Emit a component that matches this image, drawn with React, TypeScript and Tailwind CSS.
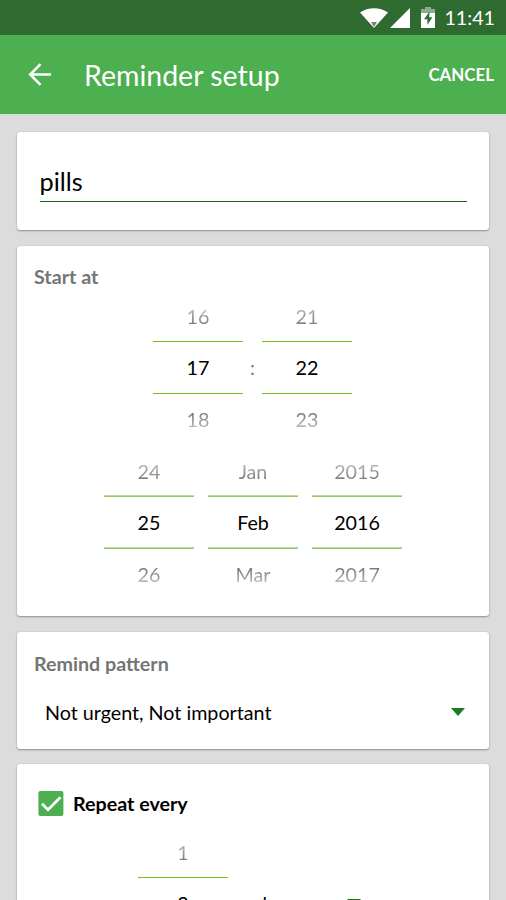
import type { ReactNode } from "react";
import clsx from "clsx";

const dateColumns = [
  ["24", "25", "26"],
  ["Jan", "Feb", "Mar"],
  ["2015", "2016", "2017"],
];

function Card({ children, className }: { children?: ReactNode; className?: string }) {
  return (
    <section
      className={clsx(
        "flex-none rounded-[3px] bg-white shadow-[0_1px_2px_rgba(0,0,0,0.35),0_0_1px_rgba(0,0,0,0.2)]",
        className
      )}
    >
      {children}
    </section>
  );
}

// Selected value sits between two 52px-spaced dividers
function Picker({ values, soft }: { values: string[]; soft?: boolean }) {
  const [prev, current, next] = values;
  const line = soft
    ? "-mt-px h-[2px] bg-linear-to-b from-[#c9e4b0] to-[#83bf4b]"
    : "h-px bg-[#74c218]";

  return (
    <div className="flex w-[90px] flex-none flex-col text-center text-[19.7px] leading-[24px] text-black">
      <div className="h-[37px] pt-px bg-linear-to-b from-[#bdbdbd] from-10% to-[#777] to-60% bg-clip-text text-transparent">
        {prev}
      </div>
      <div className={line} />
      <div className="h-[51px] pt-[14px]">{current}</div>
      <div className={line} />
      <div className="mt-[14px] h-[24px] bg-linear-to-b from-[#777] from-20% to-[#c4c4c4] to-90% bg-clip-text text-transparent">
        {next}
      </div>
    </div>
  );
}

function StatusBar() {
  return (
    <div className="flex h-[35px] flex-none items-center justify-end bg-[#2f6b31] pr-[11px] text-white">
      <svg width="28" height="20" viewBox="0 0 28 20" className="mt-px">
        <path d="M0 4.5C8-1.3 20-1.3 28 4.5L14 20Z" fill="#fff" />
        <path d="M11 14h6l-3 5z" fill="#7d7d7d" />
      </svg>
      <svg width="20" height="20" viewBox="0 0 20 20" className="ml-[2px] mt-px">
        <path d="M20 0v20H0z" fill="#fff" />
      </svg>
      <svg width="14" height="21" viewBox="0 0 14 21" className="ml-[11px]">
        <path d="M4 0h6v2h4v4H0V2h4z" fill="#8bad8c" />
        <path d="M0 6h14v15H0z" fill="#fff" />
        <path d="M8.5 4.5 3 12.2h3.4V18l5-7.7H8.2z" fill="#2f6b31" />
      </svg>
      <span className="ml-[9px] text-[19.7px] leading-[35px]">11:41</span>
    </div>
  );
}

function AppBar() {
  return (
    <header className="flex h-[78.5px] flex-none items-center bg-[#4caf50] pl-[28px] pr-[12px] text-white">
      <svg width="23" height="23" viewBox="0 0 23 23" fill="none" stroke="#fff" strokeWidth="2.6">
        <path d="M12.5 1.2 2.2 11.5l10.3 10.3M2.5 11.5H23" />
      </svg>
      <h1 className="ml-[33px] flex-1 pt-[2px] text-[28.5px] leading-[34px]">Reminder setup</h1>
      <button className="pt-[2px] text-[16.9px] font-bold leading-[20px]">CANCEL</button>
    </header>
  );
}

export default function App() {
  return (
    <div className="flex h-[900px] w-[506px] flex-col overflow-hidden bg-[#dcdcdc] font-['Lato',sans-serif]">
      <StatusBar />
      <AppBar />
      <main className="flex flex-col gap-4 px-[17px] pt-[18.5px]">
        <Card className="h-[98px] px-[22.5px] pt-[33px]">
          <div className="h-[37px] border-b border-[#0a6b10] text-[25.3px] leading-[32px] text-black">
            pills
          </div>
        </Card>

        <Card className="h-[370px] px-[17px] pt-[19px]">
          <h2 className="text-[19.7px] font-bold leading-[24px] text-[#757575]">Start at</h2>
          <div className="mt-[15px] flex pl-[119px]">
            <Picker values={["16", "17", "18"]} />
            <span className="w-[19px] pt-[52px] text-center text-[19.7px] leading-[24px] text-[#757575]">:</span>
            <Picker values={["21", "22", "23"]} />
          </div>
          <div className="mt-[27px] flex justify-center gap-[14px]">
            {dateColumns.map((values) => (
              <Picker key={values[1]} values={values} soft />
            ))}
          </div>
        </Card>

        <Card className="h-[116.5px] pl-[17px] pr-[24px] pt-[20px]">
          <h2 className="text-[19.7px] font-bold leading-[24px] text-[#757575]">Remind pattern</h2>
          <div className="mt-[25px] flex items-center justify-between pl-[11px] text-[19.7px] leading-[24px] text-black">
            <span>Not urgent, Not important</span>
            <svg width="14" height="8" viewBox="0 0 14 8" className="-mt-[2px]">
              <path d="M0 0h14L7 8z" fill="#1f7a24" />
            </svg>
          </div>
        </Card>

        <Card className="-mt-[0.5px] h-[300px] pt-[27px]">
          <label className="flex items-center pl-[21px] text-[19.7px] font-bold leading-[26px] text-black">
            <svg width="26" height="26" viewBox="0 0 26 26">
              <rect x="0.4" y="0" width="25" height="25" rx="2" fill="#4caf50" />
              <path d="m4 12.8 6 6L22.5 6.3" fill="none" stroke="#fff" strokeWidth="2.7" />
            </svg>
            <span className="ml-[9px]">Repeat every</span>
          </label>
          <div className="mt-[23px] flex pl-[121px]">
            <Picker values={["1", "2", "3"]} />
            <span className="ml-[28px] mt-[52px] w-[40px] text-[19.7px] leading-[24px] text-black">days</span>
            <svg width="14" height="8" viewBox="0 0 14 8" className="ml-[51px] mt-[59px]">
              <path d="M0 0h14L7 8z" fill="#1f7a24" />
            </svg>
          </div>
        </Card>
      </main>
    </div>
  );
}
